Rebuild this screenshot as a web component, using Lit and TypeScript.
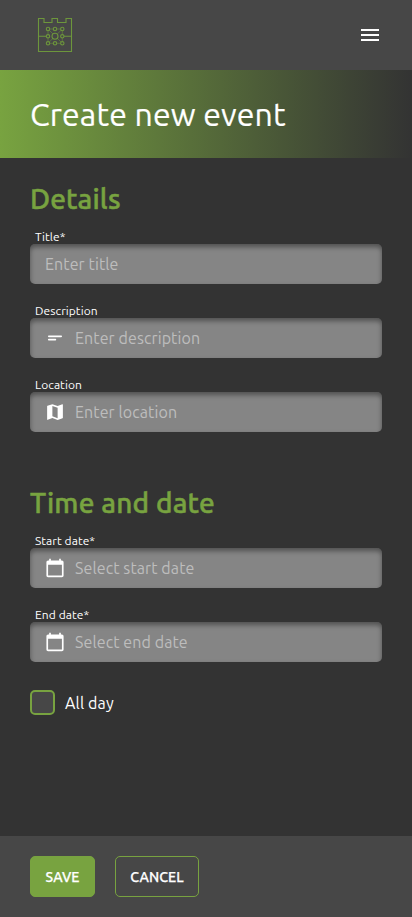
import { LitElement, html, css, svg } from "lit";
import { customElement, property } from "lit/decorators.js";

const icons: Record<string, unknown> = {
  menu: svg`<path d="M3 18h18v-2H3v2zm0-5h18v-2H3v2zm0-7v2h18V6H3z"/>`,
  notes: svg`<path d="M12.500 13h-8c-.55 0-1 .45-1 1s.45 1 1 1h8c.55 0 1-.45 1-1s-.45-1-1-1zm7-4h-15c-.55 0-1 .45-1 1s.45 1 1 1h15c.55 0 1-.45 1-1s-.45-1-1-1z"/>`,
  map: svg`<path transform="translate(-.6 -.6) scale(1.05)" d="M20.5 3l-.16.03L15 5.1 9 3 3.36 4.9c-.21.07-.36.25-.36.48V20.500c0 .28.22.5.5.5l.16-.03L9 18.900l6 2.100 5.640-1.900c.21-.07.36-.25.36-.48V3.500c0-.28-.22-.5-.5-.5zM15 19l-6-2.110V5l6 2.110V19z"/>`,
  calendar: svg`<path d="M20.300 3H19V1h-2v2H7V1H5v2H3.700C2.600 3 1.700 3.900 1.700 5v16c0 1.100.9 2 2 2h16.600c1.100 0 2-.9 2-2V5c0-1.100-.9-2-2-2zm0 18H3.700V8h16.600v13z"/>`,
};

const nodes = [
  [11, 12], [18, 12], [25.3, 12],
  [11, 19.3], [25.3, 19.3],
  [11, 26.3], [18, 26.3], [25.3, 26.3],
];

@customElement("form-field")
export class FormField extends LitElement {
  @property() label = "";
  @property() hint = "";
  @property() icon = "";

  static styles = css`
    :host { display: block; height: 54px; }
    .label { display: block; height: 14px; line-height: 14px; padding-left: 5px; font-size: 12px; letter-spacing: .07px; color: #fff; white-space: nowrap; }
    .box { height: 40px; box-sizing: border-box; border-radius: 5px; background: #858585; box-shadow: inset 0 3px 5px rgba(0, 0, 0, .4); display: flex; align-items: center; padding: 0 15px; }
    svg { width: 20px; height: 20px; fill: #fff; margin-right: 10px; }
    .hint { color: #bdbdbd; font-size: 16px; line-height: 24px; letter-spacing: .1px; white-space: nowrap; }
  `;

  render() {
    return html`<span class="label">${this.label}</span>
      <div class="box">${this.icon ? html`<svg viewBox="0 0 24 24">${icons[this.icon]}</svg>` : null}<span class="hint">${this.hint}</span></div>`;
  }
}

@customElement("app-root")
export class AppRoot extends LitElement {
  static styles = css`
    :host { display: flex; flex-direction: column; height: 917px; background: #333; color: #fff; font-family: Ubuntu, "Noto Sans", sans-serif; overflow: hidden; }
    header { height: 70px; box-sizing: border-box; background: #474747; display: flex; align-items: center; justify-content: space-between; padding: 0 30px 0 37px; }
    .logo { width: 36px; height: 36px; fill: none; stroke: #6d963c; stroke-width: 1.1; }
    .links { stroke-width: .9; stroke: #5d773f; }
    .nodes { fill: #474747; }
    .menu { width: 24px; height: 24px; fill: #fff; }
    .banner { height: 88px; display: flex; align-items: center; padding-left: 30px; background: linear-gradient(to right, #78a340, #333); }
    h1 { margin: 0; font-size: 32px; font-weight: 400; line-height: 40px; letter-spacing: .16px; -webkit-text-stroke: .2px #fff; white-space: nowrap; }
    main { flex: 1; padding: 24px 30px 0; }
    h2 { margin: 0 0 14px; height: 34px; line-height: 34px; font-size: 28px; font-weight: 500; letter-spacing: .17px; -webkit-text-stroke: .5px #78a340; color: #78a340; white-space: nowrap; }
    .fields { display: flex; flex-direction: column; gap: 20px; }
    .when { margin-top: 54px; }
    .check { display: flex; align-items: center; margin-top: 28px; gap: 10px; }
    .tick { box-sizing: border-box; width: 25px; height: 25px; border: 2px solid #78a340; border-radius: 5px; background: #474747; }
    .check-text { height: 25px; box-sizing: border-box; padding-top: 1px; font-size: 16px; line-height: 24px; letter-spacing: .15px; }
    footer { height: 81px; box-sizing: border-box; background: #474747; padding: 20px 30px; display: flex; gap: 20px; }
    .btn { box-sizing: border-box; height: 41px; width: 65px; padding: 0; border: 1px solid #78a340; border-radius: 5px; background: none; color: #fff; font-family: inherit; font-size: 14px; font-weight: 500; letter-spacing: .1px; -webkit-text-stroke: .25px #fff; display: flex; align-items: center; justify-content: center; }
    .save { background: #78a340; }
    .cancel { width: 84px; }
  `;

  render() {
    return html`
      <header>
        <svg class="logo" viewBox="0 0 36 36">
          <path d="M1.500 1.500H7V5.500H15V1.500H20.500V5.500H29V1.500H34.500V34.500H1.500zM1.500 19.300H9.500M27 19.300H34.500"/>
          <path class="links" d="M11 12H25.300V26.300H11zM11 12L25.300 26.300M25.300 12L11 26.300"/>
          <g class="nodes">
            ${nodes.map(([x, y]) => svg`<circle cx=${x} cy=${y} r="1.7"/>`)}
            <circle cx="18" cy="19.3" r="3"/>
          </g>
        </svg>
        <svg class="menu" viewBox="0 0 24 24">${icons.menu}</svg>
      </header>
      <div class="banner"><h1>Create new event</h1></div>
      <main>
        <h2>Details</h2>
        <div class="fields">
          <form-field label="Title*" hint="Enter title"></form-field>
          <form-field label="Description" hint="Enter description" icon="notes"></form-field>
          <form-field label="Location" hint="Enter location" icon="map"></form-field>
        </div>
        <h2 class="when">Time and date</h2>
        <div class="fields">
          <form-field label="Start date*" hint="Select start date" icon="calendar"></form-field>
          <form-field label="End date*" hint="Select end date" icon="calendar"></form-field>
        </div>
        <div class="check"><span class="tick"></span><span class="check-text">All day</span></div>
      </main>
      <footer><button class="btn save">SAVE</button><button class="btn cancel">CANCEL</button></footer>
    `;
  }
}
